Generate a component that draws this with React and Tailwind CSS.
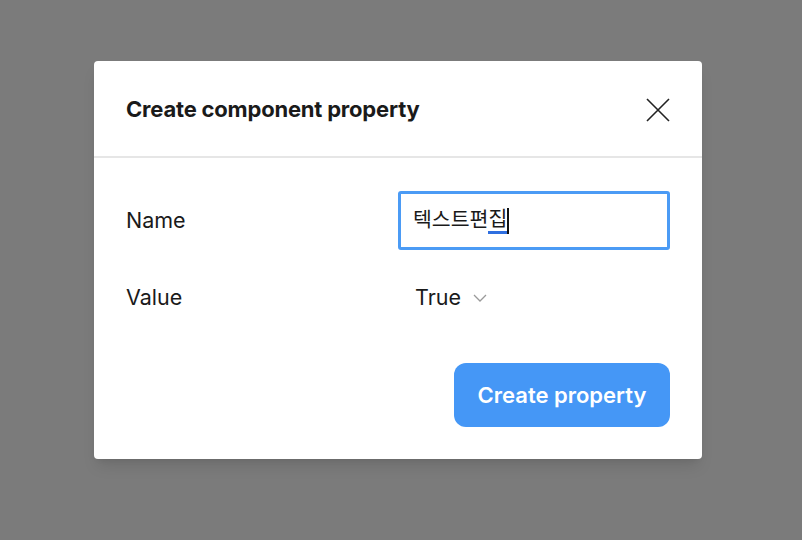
export default function App() {
  return (
    <div className="w-[802px] h-[540px] bg-[#7b7b7b] flex items-start pl-[94px] pt-[61px] font-['Inter','Noto_Sans_CJK_KR',sans-serif]">
      <div className="w-[608px] h-[398px] bg-white rounded-[4px] shadow-lg flex flex-col">
        <div className="h-[97px] flex items-center justify-between pl-8 pr-[32px] border-b-2 border-[#e6e6e6] pt-[2px]">
          <h1 className="text-[22px] font-bold text-[#1a1a1a] tracking-[-0.2px]">Create component property</h1>
          <svg width="24" height="24" viewBox="0 0 24 24" className="text-[#222]">
            <path d="M1 1 L23 23 M23 1 L1 23" stroke="currentColor" strokeWidth="1.6" fill="none" />
          </svg>
        </div>
        <div className="flex flex-col px-8 pt-[33px]">
          <div className="flex items-center">
            <div className="w-[272px] text-[21.5px] text-[#1a1a1a]">Name</div>
            <div className="w-[272px] h-[59px] border-[3px] border-[#4b9bf5] rounded-[3px] flex items-center pl-3 text-[20.5px] text-[#1a1a1a]">
              <span>텍스트편</span>
              <span className="border-b-[3px] border-[#2f6fe0] leading-[24px]">집</span>
              <span className="w-[2px] h-[26px] bg-[#111]"></span>
            </div>
          </div>
          <div className="flex items-center mt-[23px] h-[48px]">
            <div className="w-[272px] text-[21.5px] text-[#1a1a1a]">Value</div>
            <div className="flex items-center pl-[17px] gap-[12px] text-[21.5px] text-[#1a1a1a]">
              <span>True</span>
              <svg width="14" height="8" viewBox="0 0 14 8" className="text-[#9a9a9a] mt-[1px]">
                <path d="M1 1 L7 7 L13 1" stroke="currentColor" strokeWidth="1.3" fill="none" />
              </svg>
            </div>
          </div>
          <div className="flex justify-end mt-[42px]">
            <button className="w-[216px] h-[64px] rounded-[12px] bg-[#4597f6] text-white text-[22px] font-semibold">Create property</button>
          </div>
        </div>
      </div>
    </div>
  )
}
